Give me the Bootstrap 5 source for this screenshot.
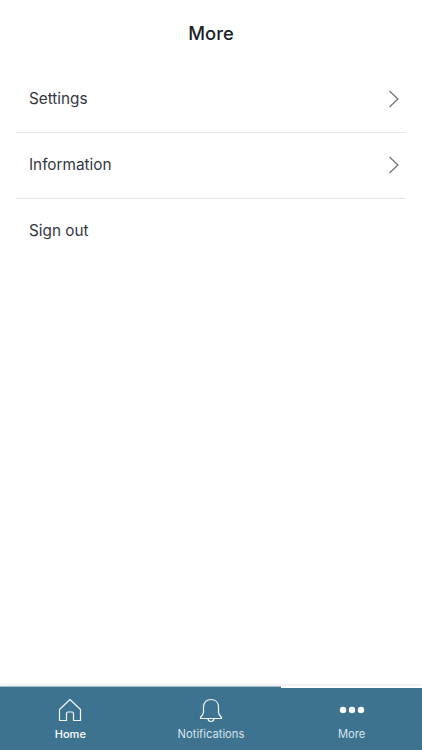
<!DOCTYPE html>
<html lang="en">
<head>
<meta charset="utf-8">
<title>More</title>
<meta name="viewport" content="width=device-width, initial-scale=1">
<link rel="stylesheet" href="https://cdn.jsdelivr.net/npm/bootstrap@5.3.0/dist/css/bootstrap.min.css">
<style>
html,body{height:100%;margin:0;overflow:hidden;}
body{font-family:Inter,"Liberation Sans",sans-serif;color:#2b2f38;background:#fff;}
.screen{height:750px;}
.page-title{font-size:18.4px;font-weight:500;color:#1b1f2a;line-height:24px;padding-top:21px;padding-bottom:22px;margin:0;}
.menu-wrap{padding:0 16px;}
.menu-row{height:66px;padding:0 6px 1px 13px;color:#33363f;font-size:15.3px;line-height:20px;text-decoration:none;border-bottom:1px solid #e6e6ea;background:transparent;}
.menu-row:last-child{border-bottom-color:transparent;}
.tabbar{height:64px;background:#3d7390;box-shadow:0 -1px 3px rgba(0,0,0,.1);border-top:1px solid #a9c0cc;position:relative;}
.tab-item{width:33.333%;color:#d6e3ea;font-size:11.2px;line-height:14px;padding-top:11px;text-decoration:none;}
.tab-item.on{color:#fff;font-weight:500;font-size:11px;}
.tab-icon{height:26px;width:26px;margin-bottom:3px;display:block;}
.tab-cover{position:absolute;right:0;top:-1px;width:141px;height:2px;background:#fff;}
</style>
</head>
<body>
<div class="screen d-flex flex-column">
  <h1 class="page-title text-center">More</h1>
  <div class="menu-wrap flex-grow-1">
    <div class="d-flex flex-column">
      <a class="menu-row d-flex align-items-center justify-content-between" href="#">
        <span>Settings</span>
        <svg width="12" height="18" viewBox="0 0 12 18" fill="none" stroke="#6e7076" stroke-width="1.2"><path d="M1.500 1l8.500 8-8.500 8"/></svg>
      </a>
      <a class="menu-row d-flex align-items-center justify-content-between" href="#">
        <span>Information</span>
        <svg width="12" height="18" viewBox="0 0 12 18" fill="none" stroke="#6e7076" stroke-width="1.2"><path d="M1.500 1l8.500 8-8.500 8"/></svg>
      </a>
      <a class="menu-row d-flex align-items-center justify-content-between" href="#">
        <span>Sign out</span>
      </a>
    </div>
  </div>
  <nav class="tabbar d-flex">
    <a class="tab-item on d-flex flex-column align-items-center" href="#">
      <svg class="tab-icon" viewBox="0 0 26 26" fill="none" stroke="#f2f7fa" stroke-width="1.2" stroke-linejoin="round"><path d="M13 1.500L2.500 11.500V22.500H9.500V15.500Q9.500 14 11 14H15Q16.500 14 16.500 15.500V22.500H23.500V11.500Z"/></svg>
      <span>Home</span>
    </a>
    <a class="tab-item d-flex flex-column align-items-center" href="#">
      <svg class="tab-icon" viewBox="0 0 26 26" fill="none" stroke="#f2f7fa" stroke-width="1.2" stroke-linejoin="round" stroke-linecap="round"><path d="M5.500 9C5.500 4 9 1.500 13 1.500S20.500 4 20.500 9V14C20.500 16.500 22.500 18.500 23.500 19.500V20.500H2.500V19.500C3.500 18.500 5.500 16.500 5.500 14Z"/><path d="M10 20.500C10 24.500 16 24.500 16 20.500"/></svg>
      <span>Notifications</span>
    </a>
    <a class="tab-item d-flex flex-column align-items-center" href="#">
      <svg class="tab-icon" viewBox="0 0 26 26" fill="#fff"><circle cx="4" cy="12" r="3.200"/><circle cx="13" cy="12" r="3.200"/><circle cx="22" cy="12" r="3.200"/></svg>
      <span>More</span>
    </a>
    <span class="tab-cover"></span>
  </nav>
</div>
<script src="https://cdn.jsdelivr.net/npm/bootstrap@5.3.0/dist/js/bootstrap.bundle.min.js"></script>
</body>
</html>
